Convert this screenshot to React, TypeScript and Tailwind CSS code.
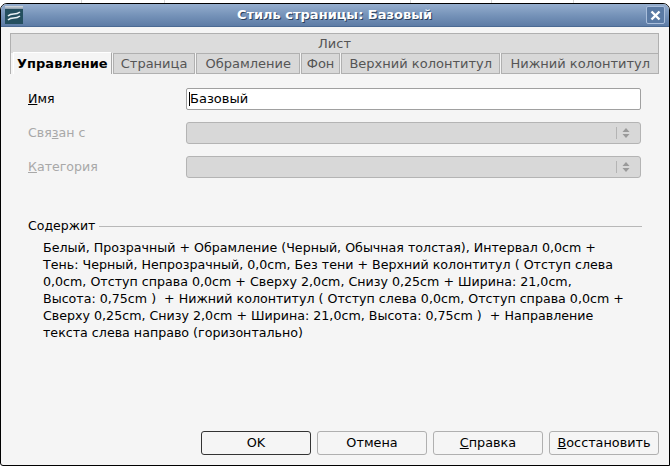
import React from "react";

const font = { fontFamily: '"DejaVu Sans", "Noto Sans", sans-serif' };

function Spinner() {
  return (
    <div className="flex items-center h-full pr-[10px]">
      <div className="w-px h-[12px] bg-[#b4b4b4] mr-[5px]" />
      <svg width="8" height="14" viewBox="0 0 8 14">
        <path d="M4 2 L7.5 6 L0.5 6 Z" fill="#9a9a9a" />
        <path d="M4 12 L7.5 8 L0.5 8 Z" fill="#9a9a9a" />
      </svg>
    </div>
  );
}

function Tab({ label, active, w }: { label: string; active?: boolean; w: string }) {
  return (
    <div
      className={
        active
          ? `${w} h-[22px] mt-[-1px] border border-b-0 border-[#a8a8a8] border-t-white border-l-white bg-[#f5f5f5] flex items-center justify-center font-bold text-black`
          : `${w} h-[21px] border border-[#b0b0b0] bg-[#d8d8d8] flex items-center justify-center text-[#555]`
      }
    >
      {label}
    </div>
  );
}

export default function App() {
  return (
    <div className="w-[670px] h-[466px] bg-white flex flex-col text-[13px]" style={font}>
      <div className="h-[3px] flex">
        <div className="w-[82px] border-r border-[#d8d8d8]" />
        <div className="w-[83px] border-r border-[#d8d8d8]" />
        <div className="w-[246px] border-r border-[#d8d8d8]" />
        <div className="w-[81px] border-r border-[#d8d8d8]" />
        <div className="w-[82px] border-r border-[#d8d8d8]" />
      </div>
      <div className="flex-1 flex flex-col border border-black rounded-t-[7px] rounded-bl-[3px] overflow-hidden bg-[#f5f5f5]">
        {/* Title bar */}
        <div className="h-[23px] flex items-center bg-gradient-to-b from-[#95aece] via-[#7693b9] to-[#5d7ca6] border-b border-[#4b6a93] pl-[4px] pr-[4px]">
          <div className="w-[18px] h-[18px] flex flex-col">
            <div className="h-[3px] bg-gradient-to-b from-[#d8dde2] to-[#8a9aa8]" />
            <div className="flex-1 bg-[#244f5f] flex items-center justify-center">
              <svg width="16" height="13" viewBox="0 0 16 13">
                <path d="M2 6 C6 2 9 6 14 2" stroke="#e8f0f4" strokeWidth="1.6" fill="none" />
                <path d="M2 10 C6 6 9 10 14 6" stroke="#e8f0f4" strokeWidth="1.6" fill="none" />
              </svg>
            </div>
          </div>
          <div
            className="flex-1 text-center font-bold text-white text-[13px]"
            style={{ textShadow: "1px 1px 0 #2a3f5c" }}
          >
            Стиль страницы: Базовый
          </div>
          <div className="w-[19px] h-[18px] border border-[#a9bedb] rounded-[2px] bg-[#5a7aa4] flex items-center justify-center">
            <svg width="11" height="11" viewBox="0 0 11 11">
              <path d="M1.5 1.5 L9.5 9.5 M9.5 1.5 L1.5 9.5" stroke="white" strokeWidth="2.4" />
            </svg>
          </div>
        </div>

        {/* Body */}
        <div className="flex-1 flex flex-col pl-[9px] pr-[10px] pt-[6px]">
          <div className="h-[20px] border border-[#b0b0b0] border-b-0 bg-[#dcdcdc] flex items-center justify-center text-[#555]">
            Лист
          </div>
          <div className="flex gap-px pl-[2px] border-l border-[#b0b0b0]">
            <Tab label="Управление" active w="w-[99px]" />
            <Tab label="Страница" w="w-[83px]" />
            <Tab label="Обрамление" w="w-[104px]" />
            <Tab label="Фон" w="w-[39px]" />
            <Tab label="Верхний колонтитул" w="w-[160px]" />
            <Tab label="Нижний колонтитул" w="w-[158px]" />
          </div>

          <div className="flex flex-col pl-[18px] pr-[18px] pt-[14px] gap-[12px] text-[12.6px]">
            <div className="flex items-center h-[22px]">
              <div className="w-[158px] text-black">
                <span className="underline">И</span>мя
              </div>
              <div className="flex-1 h-[22px] bg-white border border-[#a0a0a0] rounded-[2px] flex items-center pl-[2px] text-black text-[13px]">
                <span className="border-l border-black leading-[14px]">Базовый</span>
              </div>
            </div>
            <div className="flex items-center h-[22px]">
              <div className="w-[158px] text-[#a8a8a8]">
                Свя<span className="underline">з</span>ан с
              </div>
              <div className="flex-1 h-[22px] bg-[#d8d8d8] border border-[#b4b4b4] rounded-[3px] flex justify-end">
                <Spinner />
              </div>
            </div>
            <div className="flex items-center h-[22px]">
              <div className="w-[158px] text-[#a8a8a8]">
                <span className="underline">К</span>атегория
              </div>
              <div className="flex-1 h-[22px] bg-[#d8d8d8] border border-[#b4b4b4] rounded-[3px] flex justify-end">
                <Spinner />
              </div>
            </div>
          </div>

          <div className="flex items-center pl-[18px] pr-[17px] mt-[39px] text-[12.5px]">
            <span className="text-black">Содержит</span>
            <div className="flex-1 h-px bg-[#b8b8b8] ml-[4px]" />
          </div>
          <div className="pl-[33px] pt-[3px] text-black leading-[17px] text-[12.65px]">
            Белый, Прозрачный + Обрамление (Черный, Обычная толстая), Интервал 0,0cm +<br />
            Тень: Черный, Непрозрачный, 0,0cm, Без тени + Верхний колонтитул ( Отступ слева<br />
            0,0cm, Отступ справа 0,0cm + Сверху 2,0cm, Снизу 0,25cm + Ширина: 21,0cm,<br />
            Высота: 0,75cm )&nbsp; + Нижний колонтитул ( Отступ слева 0,0cm, Отступ справа 0,0cm +<br />
            Сверху 0,25cm, Снизу 2,0cm + Ширина: 21,0cm, Высота: 0,75cm )&nbsp; + Направление<br />
            текста слева направо (горизонтально)
          </div>

          <div className="flex-1" />
          <div className="flex justify-end gap-[6px] pb-[10px] text-[12.8px]">
            <button className="w-[110px] h-[24px] border border-[#333] rounded-[3px] bg-[#f5f5f5] text-black">
              OK
            </button>
            <button className="w-[110px] h-[24px] border border-[#b0b0b0] rounded-[3px] bg-[#f5f5f5] text-black">
              Отмена
            </button>
            <button className="w-[110px] h-[24px] border border-[#b0b0b0] rounded-[3px] bg-[#f5f5f5] text-black">
              <span className="underline">С</span>правка
            </button>
            <button className="w-[110px] h-[24px] border border-[#b0b0b0] rounded-[3px] bg-[#f5f5f5] text-black">
              <span className="underline">В</span>осстановить
            </button>
          </div>
        </div>
      </div>
    </div>
  );
}
